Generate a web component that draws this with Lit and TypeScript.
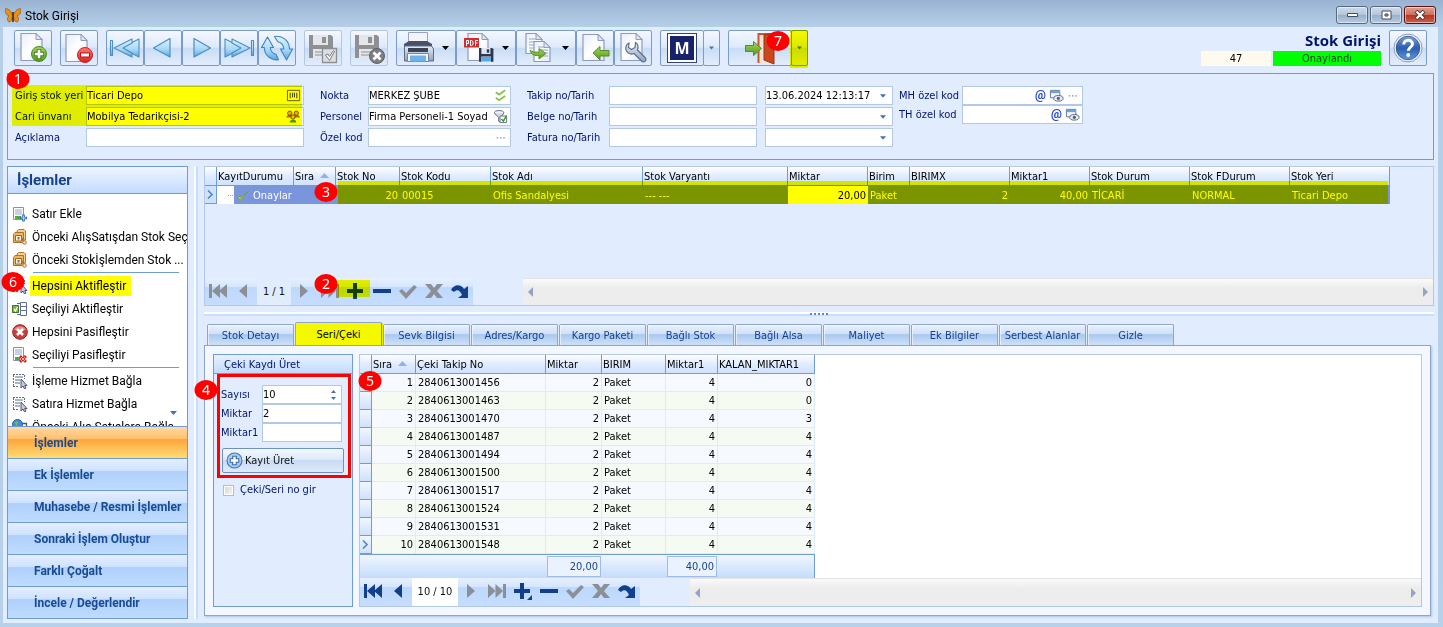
import { LitElement, html, svg, css, nothing, TemplateResult } from "lit";
import { customElement, property } from "lit/decorators.js";
import { classMap } from "lit/directives/class-map.js";
import { styleMap } from "lit/directives/style-map.js";

/* ---------- shared look ---------- */
const shared = css`
  * { box-sizing: border-box; }
  :host {
    --ui: "DejaVu Sans Condensed", "Noto Sans", sans-serif;
    --menu: Roboto, "Open Sans", sans-serif;
    --title: "Open Sans", "Noto Sans", sans-serif;
    --navy: #00146e;
    --face: #e1edff;
    --line: #6f9bd6;
    --soft: #b3c8e6;
    font: 11px/14px var(--ui);
    color: #000;
  }
  svg { display: block; flex: none; }
  button { font: inherit; color: inherit; margin: 0; padding: 0; cursor: default; }
  input, select {
    font: inherit; color: inherit; margin: 0; border: 0; background: none;
    outline: 0; min-width: 0; appearance: none; border-radius: 0;
  }
`;

/* ---------- glyphs ---------- */
const page = (x: number, y: number, w: number, h: number) => svg`
  <path d="M${x} ${y}h${w - 6}l6 6v${h - 6}h${-w}z" fill="url(#pg)" stroke="#8d9bbd" stroke-width="1.2"/>
  <path d="M${x + w - 6} ${y}v6h6z" fill="#dfe5f4" stroke="#8d9bbd"/>`;

const floppy = (x: number, y: number, s: number, dark: string, light: string) => svg`
  <g transform="translate(${x} ${y}) scale(${s})">
    <path d="M0 0h22l2 2v21H0z" fill="${dark}"/>
    <path d="M4 0h15v10H4z" fill="${light}"/><path d="M13 2h4v6h-4z" fill="${dark}"/>
    <path d="M4 14h16v9H4z" fill="${light}"/><path d="M6 17h11M6 20h11" stroke="${dark}" stroke-width="1"/>
  </g>`;

const defs = svg`<defs>
  <linearGradient id="pg" x1="0" y1="0" x2="1" y2="1"><stop offset="0" stop-color="#e9edf9"/><stop offset=".5" stop-color="#fff"/><stop offset="1" stop-color="#e3e8f6"/></linearGradient>
  <linearGradient id="bl" x1="0" y1="0" x2="0" y2="1"><stop offset="0" stop-color="#e2f4ff"/><stop offset=".6" stop-color="#a4d6f7"/><stop offset="1" stop-color="#5aa6dc"/></linearGradient>
  <linearGradient id="gr" x1="0" y1="0" x2="0" y2="1"><stop offset="0" stop-color="#a8d65a"/><stop offset="1" stop-color="#4f9a1c"/></linearGradient>
  <linearGradient id="rd" x1="0" y1="0" x2="0" y2="1"><stop offset="0" stop-color="#ff7b77"/><stop offset="1" stop-color="#d8201f"/></linearGradient>
  <linearGradient id="mt" x1="0" y1="0" x2="0" y2="1"><stop offset="0" stop-color="#e8edf6"/><stop offset="1" stop-color="#8fa0bf"/></linearGradient>
  <linearGradient id="hp" x1="0" y1="0" x2="0" y2="1"><stop offset="0" stop-color="#7fa3dc"/><stop offset=".5" stop-color="#2c5cae"/><stop offset="1" stop-color="#5f9be0"/></linearGradient>
</defs>`;

const glyphs: Record<string, TemplateResult> = {
  add: svg`${page(7, 3.5, 21, 27)}<circle cx="25" cy="24" r="7.5" fill="url(#gr)" stroke="#4c8a22"/>
    <path d="M25 19v10M20 24h10" stroke="#3f7d18" stroke-width="4.6"/><path d="M25 19.8v8.4M20.8 24h8.4" stroke="#fff" stroke-width="2.6"/>`,
  remove: svg`${page(6, 4.5, 21, 27)}<circle cx="25" cy="25" r="7.5" fill="url(#rd)" stroke="#c92322"/>
    <path d="M20 25h10" stroke="#b11" stroke-width="5"/><path d="M21 25h8" stroke="#fff" stroke-width="2.8"/>`,
  first: svg`<g fill="url(#bl)" stroke="#4b8dc4" stroke-width="1.1" stroke-linejoin="round"><path d="M4.500 10.500h2v15h-2z"/><path d="M15 18l18-9v18z"/><path d="M8 18l18-9v4l-9 5 9 5v4z"/></g>`,
  prev: svg`<path d="M9.500 18L26 8.500v18.500z" fill="url(#bl)" stroke="#4b8dc4" stroke-width="1.200" stroke-linejoin="round"/>`,
  next: svg`<path d="M28.500 18L12 8.500v18.500z" fill="url(#bl)" stroke="#4b8dc4" stroke-width="1.200" stroke-linejoin="round"/>`,
  last: svg`<g fill="url(#bl)" stroke="#4b8dc4" stroke-width="1.1" stroke-linejoin="round"><path d="M31.500 10.500h2v15h-2z"/><path d="M23 18L5 9v18z"/><path d="M30 18L12 9v4l9 5-9 5v4z"/></g>`,
  refresh: svg`<g fill="url(#bl)" stroke="#3f83bd" stroke-width="1.1" stroke-linejoin="round">
    <path d="M3.500 17.500L9.500 7l6 10.500h-3.200c.3 3.500 2.500 6 5.700 6.800l2.500 5.500C12.500 30.500 6.500 25.500 6.300 17.500z"/>
    <path d="M34.500 19L28.500 30l-6-11h3.300c-.3-4-2.600-6.600-6-7.300L16.500 6.500c8-1.200 14.800 4 15 12.500z"/></g>`,
  saveok: svg`${floppy(5, 5, 1, "#8e9093", "#e4e6ea")}<path d="M18.500 18.500h14v14h-14z" fill="#dcdee2" stroke="#8b8e93" stroke-width="1.300"/><path d="M21.500 25l2.500-1 1.500 2.500 4-6 1 1-5 9z" fill="#fff" stroke="#77797d" stroke-width="1"/>`,
  savex: svg`${floppy(5, 5, 1, "#8e9093", "#e4e6ea")}<circle cx="27" cy="26" r="7.500" fill="#7c7e82" stroke="#5f6165"/><path d="M23.500 22.500l7 7m0-7l-7 7" stroke="#fff" stroke-width="2.800"/>`,
  print: svg`<path d="M12.500 2.500h19v12h-19z" fill="#f2f4fa" stroke="#98a3bd"/>
    <path d="M13 11h18l5 3v6H8v-6z" fill="#4a5166"/><path d="M8.500 16h27l2 3v12h-29z" fill="url(#mt)" stroke="#5d6b8b"/>
    <path d="M12 18h20v4H12z" fill="#3c4357"/><path d="M11.500 23.500h21v8h-21z" fill="#f5f8fd" stroke="#7684a3"/><path d="M14 25.500h16v6H14z" fill="#6db2ec"/>`,
  pdf: svg`${page(12, 3.500, 20, 27)}<rect x="8" y="8" width="15" height="9.500" fill="#cf2f2f"/>
    <g fill="none" stroke="#fff" stroke-width="1"><path d="M10.500 16v-5.500h2v3h-2M14.500 15.500v-5h1l1.500 1v3l-1.500 1zM19.500 16v-5.500h2.500M19.500 13h2"/></g>
    ${floppy(23, 18, .6, "#2c3852", "#dfe6f2")}<path d="M26 27h9v4h-9z" fill="#5ba7e6"/>`,
  copy: svg`${page(10, 3.500, 16, 20)}<path d="M13 9h7M13 12h9M13 15h6M13 18h6" stroke="#8fa3ce"/>
    ${page(18, 11.500, 16, 20)}<path d="M22 17h6M24 20h8M27 23h5M27 26h5" stroke="#8fa3ce"/>
    <path d="M14 20c1 5 5 6 9 5.500V29l7-5.500-7-5v3.500c-4 .5-7 0-9-2z" fill="url(#gr)" stroke="#5c8f26"/>`,
  docleft: svg`${page(7, 4.500, 21, 26)}<path d="M17 23l7-6.500v4h9v5.500h-9v4z" fill="url(#gr)" stroke="#568a2b"/>`,
  wrench: svg`${page(7, 3.500, 21, 27)}<path d="M15 13c-3 1-4 5-2.500 8 2 3 5 3.500 7.500 2.500l8 8c2.500 1.500 5-1.500 3.500-3.500l-8-8c1-3 .5-6-2-7.500l-.5 5-3.500 2-3-2z" fill="url(#mt)" stroke="#5f6f8f" stroke-width="1.200"/>`,
  door: svg`<path d="M30.500 33V4h14v29" fill="#f3e3d8" stroke="#c9552a" stroke-width="2"/><path d="M36 5l10-2v31l-10-4z" fill="#c8491c" stroke="#9c3210"/>
    <path d="M17.500 15.500h8v-4l8 7-8 7v-4h-8z" fill="url(#gr)" stroke="#568a2b"/>`,
  help: svg`<circle cx="19" cy="18" r="14" fill="#eef3fb" stroke="#8c9cb8"/><circle cx="19" cy="18" r="11.800" fill="url(#hp)" stroke="#2a4f8f" stroke-width=".8"/>
    <path d="M14.800 14.500c0-5.500 8.700-5.500 8.700-.5 0 3.500-4.300 3.200-4.300 6.800" fill="none" stroke="#fff" stroke-width="3"/><circle cx="19.200" cy="25" r="1.900" fill="#fff"/>`,
};

const big = (name: string, w = 38) =>
  html`<svg width=${w - 2} height="34" viewBox="1 1 ${w - 2} 34" aria-hidden="true">${defs}${glyphs[name]}</svg>`;

const small: Record<string, TemplateResult> = {
  addrow: svg`<path d="M1.500 1.500h10v12h-10z" fill="#fff" stroke="#8491b5"/><path d="M3 4h7M3 6h7M3 8h7" stroke="#8fa3ce"/><path d="M3 10h6v3H3z" fill="#4fae2b"/><path d="M11.500 8.500v7M8 12h7" stroke="#2f6db5" stroke-width="2.600"/><path d="M11.500 9.500v5M9 12h5" stroke="#a9cdf3"/>`,
  box: svg`<path d="M5 3.500V2l1.500-1.500H12L13.500 2v9H12" fill="#f6cf93" stroke="#b87a2e"/><path d="M1.500 5.500L3 3.500h8.500v10h-10z" fill="#f0b668" stroke="#b3701f"/><path d="M3.500 6.500h6v5.500h-6z" fill="#fff4df" stroke="#a7641d"/><path d="M5.500 8h2v2.500h-2z" fill="#9a6a35"/><path d="M9.500 9l3 4" stroke="#a5723b" stroke-width="1.600"/><circle cx="12.500" cy="13.500" r="1.800" fill="#f2e2cb" stroke="#a5723b"/>`,
  cursor: svg`<path d="M3 4h8M3 7h5M3 10h5" stroke="#5e6b89"/><path d="M1 1.500h11M1 13.500h5" stroke="#5e6b89" stroke-dasharray="2 1"/><path d="M1.500 2v11M12.500 2v4" stroke="#5e6b89" stroke-dasharray="2 1"/><path d="M9 6v9l2-2 1.500 3 1.500-1-1.300-2.500H15z" fill="#c3cadb" stroke="#4c5670"/>`,
  activate: svg`<path d="M8.500 1.500h6v13h-6z" fill="#fff" stroke="#5d6f96"/><path d="M9 5.500h5M9 9.500h5" stroke="#5d6f96"/><path d="M5 2.500h3M5 13.500h3" stroke="#5d6f96"/><path d="M.5 4.500h6v7h-6z" fill="#7cb648" stroke="#3f7322"/><path d="M2 8l1.500 2L5.500 6" fill="none" stroke="#fff" stroke-width="1.300"/>`,
  cancel: svg`<circle cx="8" cy="8" r="7.300" fill="#c8403a" stroke="#98201d"/><path d="M2 6a6.500 6 0 0 1 12 0z" fill="#e58f88"/><path d="M5 5l6 6m0-6l-6 6" stroke="#fff" stroke-width="2.600"/>`,
  delrow: svg`<path d="M1.500 .5h10v13h-10z" fill="#fff" stroke="#8491b5"/><path d="M3 3h7M3 5h7M3 7h7" stroke="#8fa3ce"/><path d="M3 10h5v3H3z" fill="#4fae2b"/><path d="M8 9l6 6m0-6l-6 6" stroke="#c9302b" stroke-width="2.800"/><path d="M9 10l4 4m0-4l-4 4" stroke="#f3a39c"/>`,
  globe: svg`<circle cx="5.500" cy="5.500" r="5" fill="#3f8fd6" stroke="#23639e"/><path d="M3 3c2-2 4 0 2.500 2S8 7 7 9s-3 0-2.500-2S2 5 3 3z" fill="#6fbf4a"/><path d="M10 4.500h4.500v6H10M7 12l6 3" fill="none" stroke="#4c5670" stroke-width="1.300"/>`,
  plus: svg`<circle cx="8" cy="8" r="7" fill="#a8cdf0" stroke="#4276ad"/><path d="M8 3.500v9M3.500 8h9" stroke="#3a6ea8" stroke-width="4.400"/><path d="M8 4.500v7M4.500 8h7" stroke="#fff" stroke-width="2.200"/>`,
  check: svg`<path d="M1 10l3 4L15 2 5 10 3 8z" fill="#a7d04c" stroke="#6d9c22"/>`,
  barcode: svg`<path d="M1.500 2.500h13v11h-13z" fill="#fff" stroke="#555a66"/><path d="M4.500 5v6M7 5v5M9 5v5M11.500 5v6" stroke="#333"/>`,
  people: svg`<path d="M1 9c0-3 5-3 5 0M9 9c0-3 5-3 5 0" fill="#a77a3a" stroke="#6f4a1c"/><circle cx="4" cy="4.500" r="2.300" fill="#e4b25c" stroke="#7a4c1c"/><circle cx="11" cy="4.500" r="2.300" fill="#e4b25c" stroke="#7a4c1c"/><circle cx="7.500" cy="8.500" r="2.300" fill="#e9bd70" stroke="#7a4c1c"/><path d="M4 14.500c0-4.500 7-4.500 7 0z" fill="#3d9d33"/>`,
  ticks: svg`<path d="M3 4.500l3.500 2.500L13 2.500M3 10.500l3.500 2.500L13 8.500" fill="none" stroke="#8cc152" stroke-width="2"/>`,
  filter: svg`<ellipse cx="6.500" cy="4" rx="5" ry="2.300" fill="#eef1f7" stroke="#606c86"/><path d="M1.500 4.500L6 9v4l3 1V8l2.500-3.500" fill="#d3d9e6" stroke="#606c86"/><path d="M7.500 7.500h7v7h-7z" fill="#fff" stroke="#606c86"/><path d="M9 10.500l2 2.500 3.500-6" fill="none" stroke="#3f9a26" stroke-width="1.600"/>`,
  dots: svg`<path d="M4 8.500h1.500M7.500 8.500H9M11 8.500h1.500" stroke="#7389b5" stroke-width="1.300"/>`,
  at: svg`<text x="8" y="12" text-anchor="middle" font-size="13" font-weight="700" font-family="Roboto, sans-serif" fill="#2447d8">@</text>`,
  view: svg`<path d="M1.500 2.500h10v8h-10z" fill="#f5f8fd" stroke="#5d7499"/><path d="M2 3h9v2.500H2z" fill="#6aa4de"/><ellipse cx="10" cy="11" rx="5" ry="3" fill="#e6ebf5" stroke="#56627d"/><circle cx="10" cy="11" r="1.700" fill="#56627d"/>`,
};
const icon = (name: string, size = 16) =>
  html`<svg width=${size} height=${size} viewBox="0 0 16 16" aria-hidden="true">${small[name]}</svg>`;

const caret = (color = "#4a6fb0", w = 7) =>
  html`<svg class="caret" width=${w} height="4" viewBox="0 0 7 4" aria-hidden="true"><path d="M0 0h7L3.500 4z" fill=${color} /></svg>`;

/* ---------- record navigator ---------- */
@customElement("record-nav")
export class RecordNav extends LitElement {
  @property() position = "";
  @property({ type: Boolean }) back = false;
  @property({ type: Boolean }) white = false;
  @property({ type: Boolean }) marked = false;

  static styles = [shared, css`
    :host { display: flex; height: 27px; }
    .bar { display: flex; background: linear-gradient(#e6f0ff, #d5e6ff 32%, #bdd8fd 33%, #c6ddff); }
    .bar button { position: relative; width: 26px; padding-bottom: 2px; border: 0; background: none; display: grid; place-items: center; }
    .pos { width: 34px; background: var(--face); display: grid; place-items: center; color: #111; white-space: nowrap; }
    .pos.white { background: #fff; width: 46px; }
    .mark::after { content: ""; position: absolute; inset: 2px -1px 8px -5px; background: #ff0; mix-blend-mode: multiply; }
    .gap { width: 50px; background: var(--face); }
    .scroll { flex: 1; display: flex; align-items: center; justify-content: space-between; padding: 0 5px; border-top: 1px solid #e4e4e4; background: linear-gradient(#fafafa, #ececec 35%, #eee); }
  `];

  render() {
    const on = "#123f8c", off = "#8c9096";
    const b = this.back ? on : off;
    const items: [string, string, TemplateResult][] = [
      ["Sonraki", off, svg`<path d="M5 2l8 7-8 7z"/>`],
      ["Son kayıt", off, svg`<path d="M0 2l7.500 7L0 16zM7.500 2l7.500 7-7.500 7zM15 2h3v14h-3z"/>`],
      ["Ekle", on, svg`<path d="M6 1h4v6h6v4h-6v6H6v-6H0V7h6z"/>${this.white ? svg`<path d="M18 13v5h-5z"/>` : nothing}`],
      ["Sil", on, svg`<path d="M0 7h18v4H0z"/>`],
      ["Onayla", off, svg`<path d="M0 9l3-2 4 4 8-8 3 2-11 12z"/>`],
      ["Vazgeç", off, svg`<path d="M0 2h6l3 4 3-4h6l-6 7 6 7h-6l-3-4-3 4H0l6-7z"/>`],
      ["Yenile", on, svg`<path d="M0 8c3-6 10-6 13-1l4-3v12H7l4-3c-2-5-5-6-8-3z"/>`],
    ];
    const draw = (c: string, g: TemplateResult) =>
      html`<svg width="18" height="18" viewBox="0 0 18 18" fill=${c} aria-hidden="true">${g}</svg>`;
    return html`
      <div class="bar">
        <button aria-label="İlk kayıt">${draw(b, svg`<path d="M0 2h3v14H0zM11 2v14L3 9zM18 2v14l-8-7z"/>`)}</button>
        <button aria-label="Önceki">${draw(b, svg`<path d="M12 2v14L4 9z"/>`)}</button>
        <div class=${classMap({ pos: true, white: this.white })}>${this.position}</div>
        ${items.map(([label, c, g]) => html`
          <button aria-label=${label} class=${classMap({ mark: this.marked && label === "Ekle" })}>${draw(c, g)}</button>`)}
      </div>
      <div class="gap"></div>
      <div class="scroll">
        <svg width="5" height="10" viewBox="0 0 5 10"><path d="M5 0v10L0 5z" fill="#93a4c8" /></svg>
        <svg width="5" height="10" viewBox="0 0 5 10"><path d="M0 0v10l5-5z" fill="#93a4c8" /></svg>
      </div>`;
  }
}

/* ---------- labelled edit box ---------- */
const field = (id: string, label: string, value = "", icons: string[] = []) => html`
  <label for=${id}>${label}</label>
  <div class="edit"><input id=${id} .value=${value} />
    ${icons.map((n) => html`<button class="ico" aria-label=${label}>${icon(n, 15)}</button>`)}
  </div>`;

const combo = (label: string, value = "") => html`
  <div class="edit"><select aria-label=${label}><option>${value}</option></select>${caret("#4a6fb0", 6)}</div>`;

/* ---------- data ---------- */
const stockCols: [string, number][] = [
  ["", 12], ["KayıtDurumu", 77], ["Sıra", 42], ["Stok No", 64], ["Stok Kodu", 91], ["Stok Adı", 152],
  ["Stok Varyantı", 145], ["Miktar", 80], ["Birim", 42], ["BIRIMX", 100], ["Miktar1", 80],
  ["Stok Durum", 100], ["Stok FDurum", 100], ["Stok Yeri", 100],
];
const packCols: [string, number][] = [
  ["", 12], ["Sıra", 44], ["Çeki Takip No", 130], ["Miktar", 56], ["BIRIM", 64], ["Miktar1", 52], ["KALAN_MIKTAR1", 97],
];
const packs: [string, number][] = [
  ["2840613001456", 0], ["2840613001463", 0], ["2840613001470", 3], ["2840613001487", 4], ["2840613001494", 4],
  ["2840613001500", 4], ["2840613001517", 4], ["2840613001524", 4], ["2840613001531", 4], ["2840613001548", 4],
];
const actions: ([string, string] | null)[] = [
  ["addrow", "Satır Ekle"], ["box", "Önceki AlışSatışdan Stok Seç"], ["box", "Önceki Stokİşlemden Stok ..."], null,
  ["cursor", "Hepsini Aktifleştir"], ["activate", "Seçiliyi Aktifleştir"], ["cancel", "Hepsini Pasifleştir"], ["delrow", "Seçiliyi Pasifleştir"], null,
  ["cursor", "İşleme Hizmet Bağla"], ["cursor", "Satıra Hizmet Bağla"], ["globe", "Önceki Alış Satışlara Bağla"],
];
const groups = ["İşlemler", "Ek İşlemler", "Muhasebe / Resmi İşlemler", "Sonraki İşlem Oluştur", "Farklı Çoğalt", "İncele / Değerlendir"];
const tabs = ["Stok Detayı", "Seri/Çeki", "Sevk Bilgisi", "Adres/Kargo", "Kargo Paketi", "Bağlı Stok", "Bağlı Alsa", "Maliyet", "Ek Bilgiler", "Serbest Alanlar", "Gizle"];
const badges: [string, number, number][] = [
  ["1", 18, 79], ["2", 326, 284], ["3", 326, 192], ["4", 206, 390], ["5", 370, 381], ["6", 13, 282], ["7", 778, 41],
];

const cols = (list: [string, number][]) =>
  html`<colgroup>${list.map(([, w]) => html`<col style=${styleMap({ width: `${w}px` })} />`)}</colgroup>`;
const tableWidth = (list: [string, number][]) =>
  styleMap({ width: `${list.reduce((sum, [, w]) => sum + w, 0)}px` });
const head = (list: [string, number][]) => html`<thead><tr>${list.map(([t]) => html`
  <th scope="col">${t}${t === "Sıra" ? html`<svg class="sort" width="9" height="5" viewBox="0 0 9 5"><path d="M4.500 0L9 5H0z" fill="#8db4e8"/></svg>` : nothing}</th>`)}</tr></thead>`;
const pointer = html`<svg width="7" height="9" viewBox="0 0 7 9"><path d="M1 .5l4 4-4 4" fill="none" stroke="#4f86cc" stroke-width="1.600"/></svg>`;

/* ---------- window ---------- */
@customElement("app-root")
export class AppRoot extends LitElement {
  static styles = [shared, css`
    :host { display: block; }
    .window { position: relative; height: 100vh; display: flex; flex-direction: column; overflow: hidden;
      background: linear-gradient(#9ab3d2, #b6cfe9 27px, #b7d1ea); padding: 0 5px 4px 3px; }
    .title { flex: none; height: 27px; display: flex; align-items: center; gap: 4px; padding: 4px 2px 0; font: 12px/16px var(--menu); }
    .title .wb { width: 32px; height: 18px; border: 1px solid #56687f; border-radius: 3px; display: grid; place-items: center;
      background: linear-gradient(#cfdcea, #b3c6dc 48%, #96b0cd 50%, #b6cbe2); box-shadow: inset 0 0 0 1px #ffffff80; }
    .title .close { border-color: #5c1010; background: linear-gradient(#e0a192, #cf6f5d 48%, #b93220 50%, #c9634d); }
    .wbs { display: flex; gap: 2px; margin-left: auto; align-self: flex-start; padding-top: 2px; }
    .client { flex: 1; min-height: 0; background: var(--face); display: flex; flex-direction: column; padding: 3px 4px 4px; }

    .toolbar { display: flex; gap: 8px; padding: 0 7px; height: 36px; flex: none; }
    .set { display: flex; position: relative; }
    .tb { height: 36px; min-width: 38px; border: 1px solid #7a9cc8; border-radius: 2px; display: flex; align-items: center; justify-content: center;
      background: linear-gradient(#f4f8ff, #dde9fa 48%, #c9dcf5 50%, #e2edfc); overflow: hidden; }
    .tb.menu { width: 60px; justify-content: flex-start; gap: 3px; }
    .tb.off { border-color: #b5c6e0; }
    .tb.logo { width: 44px; }
    .tb.drop { min-width: 17px; width: 17px; margin-left: -1px; }
    .tb .m { width: 30px; height: 30px; border: 1px solid #33437e; box-shadow: inset 0 0 0 2px #fff; background: #17226b; color: #fff; display: grid; place-items: center; font: 700 16px/20px var(--title); }
    .set .mark { position: absolute; inset: 0 0 -2px auto; width: 18px; background: #ff0; mix-blend-mode: multiply; pointer-events: none; }
    .state { margin-left: auto; display: grid; grid-template-columns: 70px 108px; column-gap: 2px; align-content: end; text-align: center; }
    .state h1 { grid-column: 1 / 3; margin: 0; text-align: right; font: 700 15px/21px var(--title); color: var(--navy); }
    .state span { height: 15px; line-height: 16px; background: #fffaee; }
    .state .ok { background: #0f0; color: #10421a; }

    .head { flex: none; margin-top: 7px; border: 1px solid var(--line); padding: 12px 7px; display: flex; align-items: flex-start; color: var(--navy); }
    .fields { display: grid; row-gap: 2px; align-items: center; }
    .f1 { position: relative; grid-template-columns: 71px 218px; }
    .f1 .mark { position: absolute; inset: -1px 2px 21px -3px; background: #ff0; mix-blend-mode: multiply; pointer-events: none; }
    .f2 { grid-template-columns: 48px 143px; margin-left: 16px; }
    .f3 { grid-template-columns: 82px 148px 128px; margin-left: 16px; }
    .f3 .edit:nth-child(3n) { margin-left: 8px; margin-right: -8px; }
    .f4 { grid-template-columns: 63px 121px; margin-left: 14px; row-gap: 0; }
    label { white-space: nowrap; }
    .edit { height: 19px; border: 1px solid var(--soft); background: #fff; display: flex; align-items: center; padding-right: 1px; color: #000; }
    .edit input, .edit select { flex: 1; width: 0; height: 17px; padding: 0; }
    .edit .caret { margin-right: 5px; }
    .ico { border: 0; background: none; margin-right: 1px; }

    .main { flex: 1; min-height: 0; margin-top: 6px; display: grid; grid-template-columns: 181px 4px minmax(0, 1fr); column-gap: 6px; }
    .side { border: 1px solid var(--line); background: #fff; display: flex; flex-direction: column; min-height: 0; }
    .side h2 { flex: none; margin: 0; height: 27px; padding: 0 9px; border-bottom: 1px solid var(--line); background: linear-gradient(#f0f6ff, #c2dbff);
      font: 700 15px/27px var(--menu); color: #15428b; }
    .list { position: relative; flex: 1; min-height: 0; overflow: hidden; margin: 0; padding: 8px 0 0; list-style: none; }
    .list a { display: flex; align-items: center; gap: 4px; height: 23px; padding-left: 4px; color: #000; text-decoration: none; white-space: nowrap; font: 12px/16px var(--menu); }
    .list .sep { height: 1px; margin: 1px 8px 1px 25px; background: var(--line); }
    .list .hot { position: relative; padding: 2px; margin: 0 -2px; }
    .list .hot::after { content: ""; position: absolute; inset: 0 -3px 0 0; background: #ff0; mix-blend-mode: multiply; }
    .list .more { position: absolute; right: 10px; bottom: 11px; }
    .grp { flex: none; height: 32px; border: 0; border-top: 1px solid var(--line); padding: 0 0 0 26px; text-align: left; white-space: nowrap;
      font: 700 12px/16px var(--menu); color: #1a4a94; background: linear-gradient(#e4efff, #cfe2fe 38%, #aed1fc 40%, #bfdbff); }
    .grp.on { background: linear-gradient(#ffd9a5, #ffc06b 38%, #ffa53d 40%, #ffdc75); }
    .vsplit { background: linear-gradient(90deg, #fff, #f4f8ff 50%, #c7dfff 51%); border-radius: 1px; }

    .work { display: flex; flex-direction: column; min-height: 0; }
    .grid1 { position: relative; flex: 0 0 140px; border: 1px solid var(--soft); display: flex; flex-direction: column; overflow: hidden; }
    .rows { flex: 1; min-height: 0; position: relative; overflow: hidden; }
    table { border-collapse: separate; border-spacing: 0; table-layout: fixed; }
    th { height: 19px; padding: 1px 0 0 1px; text-align: left; font-weight: 400; white-space: nowrap; border-right: 1px solid var(--line); border-bottom: 1px solid var(--line);
      background: linear-gradient(#fff, #e0ecff 50%, #cfe2ff); overflow: hidden; }
    .sort { display: inline-block; margin-left: 6px; vertical-align: 2px; }
    td { height: 18px; padding: 1px 2px 0; white-space: nowrap; overflow: hidden; }
    .num { text-align: right; }
    .ind { padding: 0 2px; background: linear-gradient(#f0f6ff, #cfe1fb); border-right: 1px solid var(--line); border-bottom: 1px solid var(--line); }
    .sel td { background: #7b95dd; color: #fff; }
    .sel .ind { background: #cfe1fb; }
    .sel .cur { background: #fff; color: #000; }
    .sel .st { padding: 1px 0 0; background: linear-gradient(90deg, #fff 17px, #7b95dd 17px); }
    .tree { display: flex; align-items: center; gap: 4px; padding-left: 11px; }
    .tree i { flex: none; width: 5px; border-top: 1px dotted #8aa; }
    .rows .mark { position: absolute; left: 133px; top: 14px; width: 1050px; height: 23px; background: #ff0; mix-blend-mode: multiply; pointer-events: none; }

    .hsplit { flex: none; height: 4px; margin: 6px 0; background: linear-gradient(#fff 50%, #c7dfff 51%); display: grid; place-items: center; }
    .hsplit i { width: 18px; height: 2px; background: repeating-linear-gradient(90deg, #5b86c8 0 2px, #fff 2px 4px); }
    .tabs { flex: none; height: 23px; display: flex; align-items: flex-end; gap: 1px; padding-left: 3px; }
    .tab { width: 87px; height: 21px; padding-top: 2px; border: 1px solid #8fa5cd; border-bottom: 0; border-radius: 2px 2px 0 0; color: #15428b; white-space: nowrap;
      background: linear-gradient(#e8f1ff, #cfe0f8 45%, #a9c8ef 48%, #cfe1f9); box-shadow: inset 1px 1px 0 #ffffff90; }
    .tab.on { position: relative; height: 23px; color: #000; background: #f5f9ff; }
    .tab.on::after { content: ""; position: absolute; inset: 0 -2px 0 0; background: #ff0; mix-blend-mode: multiply; }
    .sheet { flex: 1; min-height: 0; margin: 0 3px 3px 0; border: 1px solid #8fa5cd; background: #f3f7ff; padding: 8px; display: flex; gap: 6px; box-shadow: 1px 1px 2px #a9c4ea; }
    .make { flex: none; width: 140px; border: 1px solid var(--line); background: var(--face); color: var(--navy); }
    .make h3 { margin: 0; height: 19px; padding: 0 10px; font: inherit; line-height: 19px; border-bottom: 1px solid var(--line); background: linear-gradient(#e8f2ff, #c2dbff); }
    .red { margin: 0 1px 0 3px; border: 3px solid #f00; padding: 8px 3px 4px 1px; height: 104px; }
    .red .fields { grid-template-columns: 41px 80px; row-gap: 0; }
    .spin { display: grid; gap: 4px; margin-right: 4px; }
    .go { margin: 6px 0 0 1px; width: 122px; height: 25px; border: 1px solid #6d92c4; border-radius: 2px; display: flex; align-items: center; gap: 2px; padding: 0 3px; color: #111;
      background: linear-gradient(#f3f8ff, #dce8fa 48%, #c8daf3 50%, #e0ebfb); }
    .tick { display: flex; align-items: center; gap: 6px; margin: 5px 9px; }
    .tick input { width: 11px; height: 11px; border: 1px solid #a9bfe0; background: linear-gradient(135deg, #d4d4d4, #f8f8f8); box-shadow: inset 0 0 0 1px #fff; }

    .grid2 { flex: 1; min-width: 0; border: 1px solid var(--soft); background: #fff; display: flex; flex-direction: column; }
    .grid2 tbody td { border-right: 1px solid #dfeaff; border-bottom: 1px solid #dfeaff; background: #f6faff; }
    .grid2 tbody tr:nth-child(even) td { background: #f5fbf2; }
    .grid2 tbody tr .ind, .grid2 tbody tr:nth-child(even) .ind { background: linear-gradient(#f0f6ff, #cfe1fb); border-color: var(--line); }
    .grid2 tfoot td { height: 24px; padding: 1px 1px; border-top: 1px solid var(--line); background: linear-gradient(#f0f6ff, #c5dcfc); color: #15428b; }
    .grid2 tfoot td:last-child { border-right: 1px solid var(--line); }
    .sum { display: block; height: 21px; padding: 3px 2px; border: 1px solid #9dbde6; background: #eaf2ff; text-align: right; }
    .grid2 record-nav { margin-top: auto; height: 28px; }

    .badge { position: absolute; width: 23px; height: 20px; border-radius: 50%; background: #f00; color: #fff; display: grid; place-items: center;
      font: 14px/20px "Noto Sans", sans-serif; transform: translate(-50%, -50%); pointer-events: none; }
  `];

  render() {
    return html`
      <div class="window">
        <header class="title">
          <svg width="16" height="16" viewBox="0 0 16 16" aria-hidden="true">
            <path d="M7.500 7C6 2 2 0 0 1c0 3 1 6 4 7-2 1-2 5 0 6 2 0 3-3 3.500-5M8.500 7C10 2 14 0 16 1c0 3-1 6-4 7 2 1 2 5 0 6-2 0-3-3-3.500-5" fill="#e8901c" stroke="#9a5208" stroke-width=".7"/>
            <path d="M8 4v10" stroke="#3c2205" stroke-width="1.500"/>
          </svg>
          <span>Stok Girişi</span>
          <div class="wbs">
            <button class="wb" aria-label="Küçült"><svg width="11" height="6"><path d="M.5 1.500h10v3h-10z" fill="#fff" stroke="#444f5e"/></svg></button>
            <button class="wb" aria-label="Büyüt"><svg width="11" height="10"><path d="M1 1h9v8H1z" fill="#fff" stroke="#444f5e"/><path d="M4 4h3v2H4z" fill="#9ab" stroke="#444f5e"/></svg></button>
            <button class="wb close" aria-label="Kapat"><svg width="12" height="10"><path d="M2 1l8 8m0-8L2 9" stroke="#4c3030" stroke-width="4"/><path d="M2.500 1.500l7 7m0-7l-7 7" stroke="#fff" stroke-width="2.400"/></svg></button>
          </div>
        </header>

        <div class="client">
          <div class="toolbar">
            <button class="tb" aria-label="Yeni">${big("add")}</button>
            <button class="tb" aria-label="Sil">${big("remove")}</button>
            <div class="set">
              ${["first", "prev", "next", "last", "refresh"].map((n) => html`<button class="tb" aria-label=${n}>${big(n)}</button>`)}
            </div>
            <button class="tb off" aria-label="Kaydet">${big("saveok")}</button>
            <button class="tb off" aria-label="Vazgeç">${big("savex")}</button>
            <div class="set">
              ${["print", "pdf", "copy"].map((n) => html`<button class="tb menu" aria-label=${n}>${big(n, 44)}${caret("#000")}</button>`)}
              <button class="tb" aria-label="Aktar">${big("docleft")}</button>
              <button class="tb" aria-label="Ayarlar">${big("wrench")}</button>
            </div>
            <div class="set">
              <button class="tb logo"><span class="m">M</span></button>
              <button class="tb drop" aria-label="Seçenekler">${caret("#4a6fb0", 5)}</button>
            </div>
            <div class="set">
              <button class="tb" aria-label="Çıkış">${big("door", 64)}</button>
              <button class="tb drop" aria-label="Çıkış seçenekleri">${caret("#4a6fb0", 5)}</button>
              <div class="mark"></div>
            </div>
            <div class="state"><h1>Stok Girişi</h1><span>47</span><span class="ok">Onaylandı</span></div>
            <button class="tb" aria-label="Yardım">${big("help")}</button>
          </div>

          <section class="head">
            <div class="fields f1">
              ${field("yer", "Giriş stok yeri", "Ticari Depo", ["barcode"])}
              ${field("cari", "Cari ünvanı", "Mobilya Tedarikçisi-2", ["people"])}
              ${field("acik", "Açıklama")}
              <div class="mark"></div>
            </div>
            <div class="fields f2">
              ${field("nokta", "Nokta", "MERKEZ ŞUBE", ["ticks"])}
              ${field("pers", "Personel", "Firma Personeli-1 Soyad", ["filter"])}
              ${field("ozel", "Özel kod", "", ["dots"])}
            </div>
            <div class="fields f3">
              ${field("takip", "Takip no/Tarih")}${combo("Takip tarihi", "13.06.2024 12:13:17")}
              ${field("belge", "Belge no/Tarih")}${combo("Belge tarihi")}
              ${field("fatura", "Fatura no/Tarih")}${combo("Fatura tarihi")}
            </div>
            <div class="fields f4">
              ${field("mh", "MH özel kod", "", ["at", "view", "dots"])}
              ${field("th", "TH özel kod", "", ["at", "view"])}
            </div>
          </section>

          <div class="main">
            <nav class="side">
              <h2>İşlemler</h2>
              <ul class="list">
                ${actions.map((a) => a
                  ? html`<li><a href="#">${icon(a[0])}<span class=${a[1] === "Hepsini Aktifleştir" ? "hot" : ""}>${a[1]}</span></a></li>`
                  : html`<li class="sep"></li>`)}
                <li class="more">${caret()}</li>
              </ul>
              ${groups.map((g, i) => html`<button class=${classMap({ grp: true, on: i === 0 })}>${g}</button>`)}
            </nav>
            <div class="vsplit"></div>
            <div class="work">
              <section class="grid1">
                <div class="rows">
                  <table style=${tableWidth(stockCols)}>
                    ${cols(stockCols)}${head(stockCols)}
                    <tbody><tr class="sel">
                      <td class="ind">${pointer}</td>
                      <td class="st"><div class="tree"><i></i>${icon("check", 12)}<span>Onaylar</span></div></td>
                      <td></td><td class="num">20</td><td>00015</td><td>Ofis Sandalyesi</td><td>--- ---</td>
                      <td class="num cur">20,00</td><td>Paket</td><td class="num">2</td><td class="num">40,00</td>
                      <td>TİCARİ</td><td>NORMAL</td><td>Ticari Depo</td>
                    </tr></tbody>
                  </table>
                  <div class="mark"></div>
                </div>
                <record-nav position="1 / 1" marked></record-nav>
              </section>

              <div class="hsplit"><i></i></div>

              <div class="tabs" role="tablist">
                ${tabs.map((t, i) => html`<button role="tab" aria-selected=${i === 1} class=${classMap({ tab: true, on: i === 1 })}>${t}</button>`)}
              </div>
              <section class="sheet">
                <div class="make">
                  <h3>Çeki Kaydı Üret</h3>
                  <div class="red">
                    <div class="fields">
                      <label for="sayi">Sayısı</label>
                      <div class="edit"><input id="sayi" .value=${"10"} />
                        <span class="spin"><svg width="5" height="3"><path d="M2.500 0L5 3H0z" fill="#4a6fb0"/></svg><svg width="5" height="3"><path d="M0 0h5L2.500 3z" fill="#4a6fb0"/></svg></span></div>
                      ${field("mik", "Miktar", "2")}
                      ${field("mik1", "Miktar1")}
                    </div>
                    <button class="go">${icon("plus", 17)}Kayıt Üret</button>
                  </div>
                  <label class="tick"><input type="checkbox" />Çeki/Seri no gir</label>
                </div>
                <div class="grid2">
                  <table style=${tableWidth(packCols)}>
                    ${cols(packCols)}${head(packCols)}
                    <tbody>${packs.map(([no, left], i) => html`<tr>
                      <td class="ind">${i === packs.length - 1 ? pointer : nothing}</td>
                      <td class="num">${i + 1}</td><td>${no}</td><td class="num">2</td><td>Paket</td><td class="num">4</td><td class="num">${left}</td>
                    </tr>`)}</tbody>
                    <tfoot><tr>
                      <td colspan="3"></td><td><span class="sum">20,00</span></td><td></td><td><span class="sum">40,00</span></td><td></td>
                    </tr></tfoot>
                  </table>
                  <record-nav position="10 / 10" back white></record-nav>
                </div>
              </section>
            </div>
          </div>
        </div>
        ${badges.map(([n, x, y]) => html`<span class="badge" style=${styleMap({ left: `${x}px`, top: `${y}px` })}>${n}</span>`)}
      </div>`;
  }
}
